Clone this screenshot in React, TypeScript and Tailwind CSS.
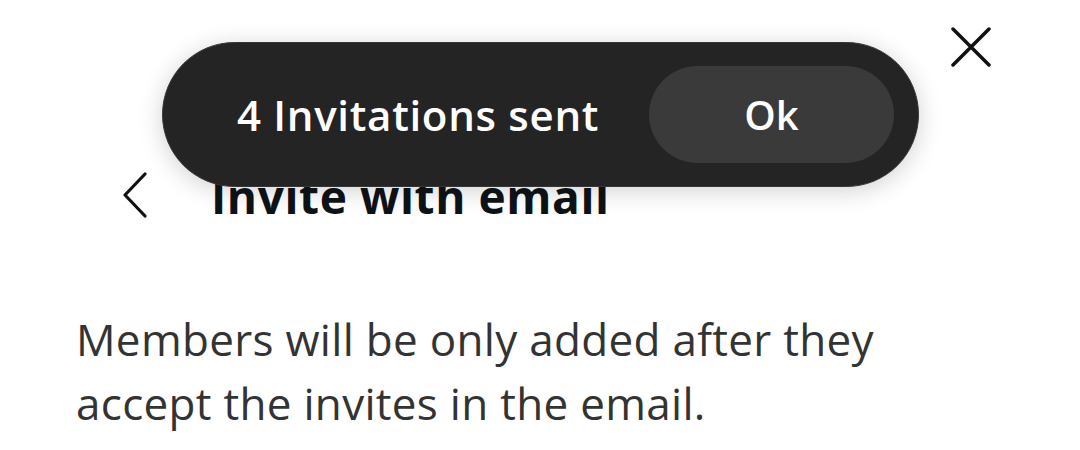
import React from "react";

function CloseIcon() {
  return (
    <svg width="40" height="40" viewBox="0 0 40 40" fill="none" stroke="#111" strokeWidth="3.5" strokeLinecap="round">
      <path d="M2 2 L38 38 M38 2 L2 38" />
    </svg>
  );
}

function BackIcon() {
  return (
    <svg width="26" height="48" viewBox="0 0 26 48" fill="none" stroke="#111" strokeWidth="3.2" strokeLinecap="round" strokeLinejoin="round">
      <path d="M23 2 L3 23 L23 44" />
    </svg>
  );
}

export default function App() {
  return (
    <div
      className="relative w-[1080px] h-[450px] overflow-hidden bg-white"
      style={{ fontFamily: '"Open Sans", "Noto Sans", sans-serif' }}
    >
      <div className="flex flex-col pt-[27px]">
        <div className="flex h-[40px] justify-end pr-[89px]">
          <button className="block h-[40px] w-[40px]" aria-label="Close">
            <CloseIcon />
          </button>
        </div>

        <div className="mt-[99px] flex h-[60px] items-center pl-[122px]">
          <BackIcon />
          <h2 className="ml-[63px] text-[46px] font-bold leading-none tracking-[0.6px] text-[#0e1318]">
            Invite with email
          </h2>
        </div>

        <p className="mt-[81px] pl-[76px] text-[44px] leading-[64px] tracking-[0.3px] text-[#333333]">
          Members will be only added after they
          <br />
          accept the invites in the email.
        </p>
      </div>

      <div className="absolute left-[162px] top-[42px] flex h-[145px] w-[757px] items-center justify-between rounded-full border border-[#363636] bg-[#242424] pl-[74px] pr-[24px] shadow-[0_4px_24px_rgba(0,0,0,0.18)]">
        <span className="text-[42px] font-semibold tracking-[0.7px] text-white">4 Invitations sent</span>
        <button className="flex h-[97px] w-[245px] items-center justify-center rounded-full bg-[#3a3a3a] text-[40px] font-semibold text-white">
          Ok
        </button>
      </div>
    </div>
  );
}
